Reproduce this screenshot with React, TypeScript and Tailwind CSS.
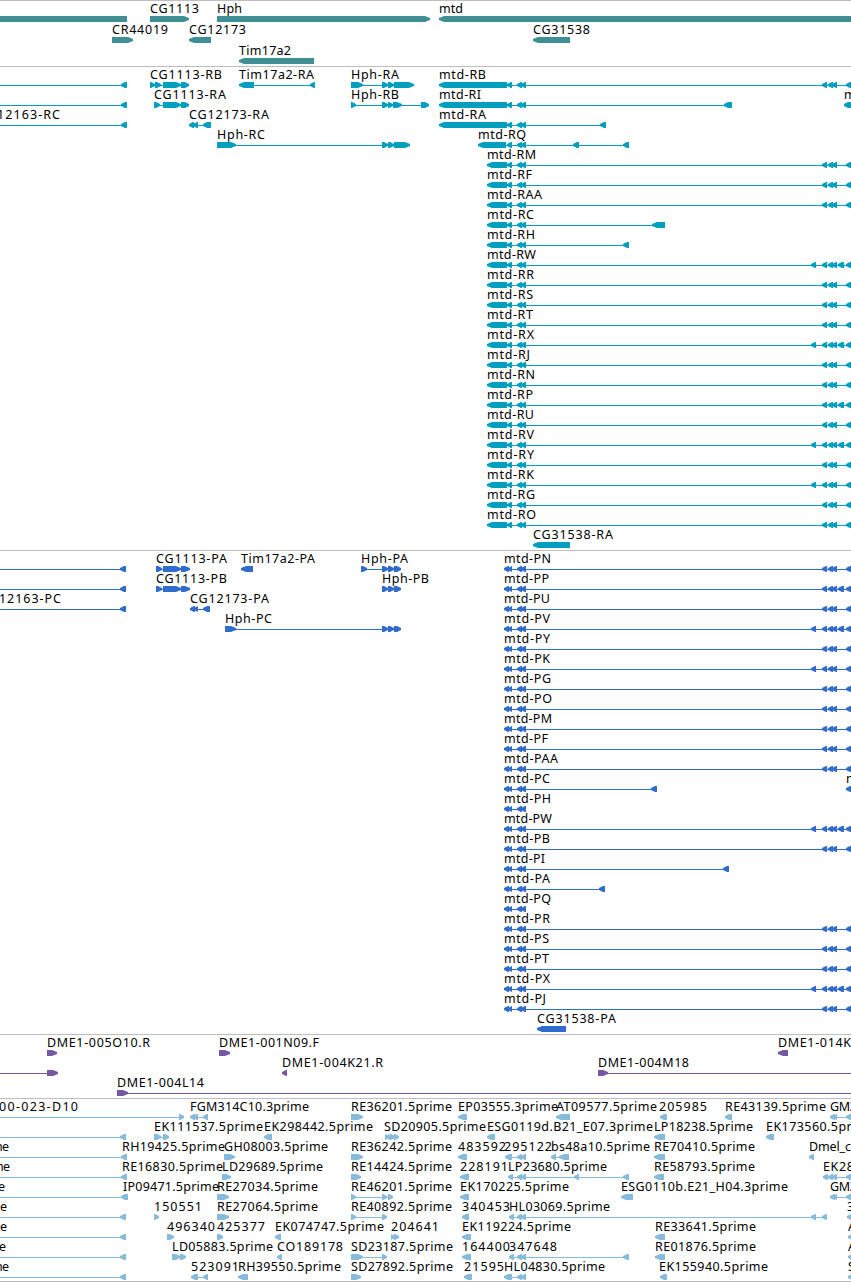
import React from "react";

type Strand = "L" | "R";
type Span = [number, number];

type Feature = {
  name?: string;
  strand: Strand;
  exons: Span[];
  // x of the label, when it is not the start of the feature
  labelX?: number;
  // x where the connecting line starts or stops, when it runs past the exons
  from?: number;
  to?: number;
};

type TrackProps = {
  color: string;
  rows: Feature[][];
  rowHeight?: number;
  className?: string;
};

const WIDTH = 851;
const EDGE = 860;

// label advance per character, 8px for everything not listed
const ADVANCE: Record<string, number> = {
  "-": 7, ".": 4, _: 6, A: 8, D: 9, E: 7, F: 6, G: 9, H: 9, I: 3, L: 6,
  M: 10, N: 9, O: 10, P: 7, Q: 9, S: 7, T: 7, W: 10, J: 4, a: 7, c: 6,
  e: 7, i: 3, l: 3, m: 11, r: 5, s: 6, t: 5,
};

const labelWidth = (text: string) =>
  text.split("").reduce((sum, ch) => sum + (ADVANCE[ch] ?? 8), 0);

const left = (name: string, exons: Span[], extra: Partial<Feature> = {}): Feature => ({
  name,
  strand: "L",
  exons,
  ...extra,
});

const right = (name: string, exons: Span[], extra: Partial<Feature> = {}): Feature => ({
  name,
  strand: "R",
  exons,
  ...extra,
});

function exonPoints([a, b]: Span, strand: Strand) {
  const head = b - a > 8 ? 5 : 4;
  if (strand === "R") {
    return `${a},13 ${b - head},13 ${b},15 ${b},17 ${b - head},19 ${a},19`;
  }
  return `${b},13 ${a + head},13 ${a},15 ${a},17 ${a + head},19 ${b},19`;
}

function FeatureGlyph({ feature, color }: { feature: Feature; color: string }) {
  const { name, strand, exons, labelX, from, to } = feature;
  const start = from ?? exons[0][0];
  const end = to ?? exons[exons.length - 1][1];
  return (
    <g>
      {(exons.length > 1 || from !== undefined || to !== undefined) && (
        <rect x={start} y={16} width={end - start} height={1} fill={color} shapeRendering="crispEdges" />
      )}
      {exons.map((exon) => (
        <polygon key={exon[0]} points={exonPoints(exon, strand)} fill={color} />
      ))}
      {name && (
        <text
          x={labelX ?? start}
          y={10}
          textLength={labelWidth(name)}
          className="fill-black font-['Noto_Sans','DejaVu_Sans',sans-serif] text-[12.5px]"
        >
          {name}
        </text>
      )}
    </g>
  );
}

function Track({ color, rows, rowHeight = 20, className = "pb-px" }: TrackProps) {
  return (
    <section className={`border-t border-[#bebebe] pt-0.5 ${className}`}>
      {rows.map((row, i) => (
        <svg key={i} width={WIDTH} height={rowHeight} className="block overflow-visible">
          {row.map((feature, j) => (
            <FeatureGlyph key={j} feature={feature} color={color} />
          ))}
        </svg>
      ))}
    </section>
  );
}

const genes: Feature[][] = [
  [
    { strand: "L", exons: [[-20, 127]] },
    right("CG1113", [[150, 189]]),
    right("Hph", [[217, 430]]),
    left("mtd", [[439, EDGE]]),
  ],
  [
    right("CR44019", [[112, 133]]),
    left("CG12173", [[189, 211]]),
    left("CG31538", [[533, 570]]),
  ],
  [left("Tim17a2", [[239, 314]])],
];

// exons shared by the mtd isoforms
const pair: Span[] = [[517, 522], [521, 526]];
const tail: Span[] = [[822, 827], [828, 833], [832, 837], [846, 852]];
const tailP: Span[] = [[822, 827], [828, 833], [832, 837], [838, 844], [846, 852]];
const tailK: Span[] = [[811, 816], ...tail];
const tailW: Span[] = [[811, 816], ...tailP];

const mtdR = (suffix: string, rest: Span[], start = 487, stop = 507) =>
  left(`mtd-R${suffix}`, [[start, stop], [507, 512], ...pair, ...rest]);

const mtdP = (suffix: string, rest: Span[]) =>
  left(`mtd-P${suffix}`, [[504, 509], [508, 512], ...pair, ...rest]);

const transcripts: Feature[][] = [
  [
    left("", [[121, 127]], { from: -10 }),
    right("CG1113-RB", [[150, 155], [155, 161], [163, 181], [181, 189]]),
    left("Tim17a2-RA", [[239, 254], [310, 315]]),
    right("Hph-RA", [[351, 363], [382, 388], [388, 394], [394, 414]]),
    mtdR("B", tail, 439),
  ],
  [
    left("", [[121, 127]], { from: -10 }),
    right("CG1113-RA", [[154, 160], [163, 181], [181, 189]]),
    right("Hph-RB", [[351, 356], [382, 388], [388, 393], [393, 402], [421, 429]]),
    mtdR("I", [[724, 732]], 439),
    left("m", [[844, 852]]),
  ],
  [
    left("12163-RC", [[121, 127]], { from: -10, labelX: -3 }),
    left("CG12173-RA", [[189, 194], [193, 198], [203, 211]]),
    mtdR("A", [[600, 606]], 439),
  ],
  [
    right("Hph-RC", [[217, 236], [382, 388], [388, 394], [394, 410]]),
    mtdR("Q", [[573, 579], [623, 629]], 478, 506),
  ],
  [mtdR("M", tail)],
  [mtdR("F", tail)],
  [mtdR("AA", tail)],
  [mtdR("C", [[652, 665]])],
  [mtdR("H", [[623, 629]])],
  [mtdR("W", tailW)],
  [mtdR("R", tail)],
  [mtdR("S", tail)],
  [mtdR("T", tail)],
  [mtdR("X", tailW)],
  [mtdR("J", tail)],
  [mtdR("N", tail)],
  [mtdR("P", tailP)],
  [mtdR("U", tail)],
  [mtdR("V", tailW)],
  [mtdR("Y", tail)],
  [mtdR("K", tailK)],
  [mtdR("G", tail)],
  [mtdR("O", tail)],
  [left("CG31538-RA", [[533, 570]])],
];

const codingRegions: Feature[][] = [
  [
    left("", [[120, 126]], { from: -10 }),
    right("CG1113-PA", [[156, 162], [163, 181], [181, 190]]),
    left("Tim17a2-PA", [[241, 253]]),
    right("Hph-PA", [[361, 367], [382, 388], [388, 394], [394, 401]]),
    mtdP("N", tail),
  ],
  [
    left("", [[120, 126]], { from: -10 }),
    right("CG1113-PB", [[156, 162], [163, 181], [181, 190]]),
    right("Hph-PB", [[382, 388], [388, 394], [394, 401]]),
    mtdP("P", tailP),
  ],
  [
    left("12163-PC", [[120, 126]], { from: -10, labelX: -1 }),
    left("CG12173-PA", [[190, 195], [194, 198], [203, 210]]),
    mtdP("U", tail),
  ],
  [
    right("Hph-PC", [[225, 236], [382, 388], [388, 394], [394, 401]]),
    mtdP("V", tailW),
  ],
  [mtdP("Y", tail)],
  [mtdP("K", tailK)],
  [mtdP("G", tail)],
  [mtdP("O", tail)],
  [mtdP("M", tail)],
  [mtdP("F", tail)],
  [mtdP("AA", tail)],
  [mtdP("C", [[651, 657]]), left("m", [[846, 852]])],
  [mtdP("H", [])],
  [mtdP("W", tailW)],
  [mtdP("B", tail)],
  [mtdP("I", [[723, 729]])],
  [mtdP("A", [[599, 605]])],
  [mtdP("Q", [])],
  [mtdP("R", tail)],
  [mtdP("S", tail)],
  [mtdP("T", tail)],
  [mtdP("X", tailW)],
  [mtdP("J", tail)],
  [left("CG31538-PA", [[537, 566]])],
];

const bacEnds: Feature[][] = [
  [
    right("DME1-005O10.R", [[47, 57]]),
    right("DME1-001N09.F", [[219, 230]]),
    left("DME1-014K", [[778, 788]]),
  ],
  [
    right("", [[47, 58]], { from: -10 }),
    left("DME1-004K21.R", [[282, 287]]),
    right("DME1-004M18", [[598, 608]], { to: EDGE }),
  ],
  [right("DME1-004L14", [[117, 128]], { to: EDGE })],
];

const ests: Feature[][] = [
  [
    right("00-023-D10", [[179, 184]], { from: -10, labelX: -1 }),
    left("FGM314C10.3prime", [[190, 195], [193, 198], [203, 208]]),
    right("RE36201.5prime", [[351, 363]]),
    left("EP03555.3prime", [[458, 467]]),
    left("AT09577.5prime", [[556, 570]]),
    left("205985", [[660, 667]], { labelX: 659 }),
    left("RE43139.5prime", [[725, 732]]),
    left("GM2", [[830, 835], [833, 837], [846, 852]]),
  ],
  [
    left("", [[120, 126]], { from: -10 }),
    right("EK111537.5prime", [[154, 161], [163, 169]]),
    left("EK298442.5prime", [[264, 272]]),
    right("SD20905.5prime", [[385, 389], [388, 392], [390, 395], [394, 399]], { labelX: 384 }),
    left("ESG0119d.B21_E07.3prime", [[487, 495]]),
    left("LP18238.5prime", [[654, 665]]),
    left("EK173560.5prime", [[766, 774]]),
  ],
  [
    left("me", [[121, 127]], { from: -10, labelX: -9 }),
    right("GH08003.5prime", [[224, 235]]),
    left("RH19425.5prime", [], { from: 122, to: 122 }),
    right("RE36242.5prime", [[351, 363]]),
    left("483592", [[458, 467]]),
    left("295122", [[505, 512], ...pair], { labelX: 504 }),
    left("bs48a10.5prime", [[551, 556], [559, 569]]),
    left("RE70410.5prime", [[654, 665]]),
    left("Dmel_c", [[809, 814]]),
  ],
  [
    left("me", [[121, 127]], { from: -10, labelX: -8 }),
    left("RE16830.5prime", [], { from: 122, to: 122 }),
    right("LD29689.5prime", [[222, 231]]),
    right("RE14424.5prime", [[351, 361]]),
    left("228191", [[460, 469]]),
    left("LP23680.5prime", [[508, 513], ...pair, [574, 579], [623, 629]]),
    left("RE58793.5prime", [[654, 664]]),
    left("EK28", [[823, 828], [828, 833], [832, 837], [846, 852]]),
  ],
  [
    left("e", [[121, 128]], { from: -10, labelX: -2 }),
    left("IP09471.5prime", [], { from: 123, to: 123 }),
    right("RE27034.5prime", [[217, 229]]),
    right("RE46201.5prime", [[351, 356], [382, 387], [388, 393]]),
    left("EK170225.5prime", [[460, 469]]),
    left("ESG0110b.E21_H04.3prime", [[621, 633]]),
    left("GM2", [[830, 835], [833, 837], [846, 852]]),
  ],
  [
    left("e", [[120, 126]], { from: -10, labelX: 0 }),
    right("150551", [[154, 159]]),
    right("RE27064.5prime", [[217, 229]]),
    right("RE40892.5prime", [[351, 356], [382, 387]]),
    left("340453", [[462, 469]]),
    left("HL03069.5prime", [[509, 514], ...pair, [811, 816], [822, 827]]),
    left("3", [[847, 852]]),
  ],
  [
    left("e", [[120, 126]], { from: -10, labelX: 0 }),
    right("496340", [[167, 174]]),
    right("425377", [[217, 223]]),
    left("EK074747.5prime", [[275, 281]]),
    right("204641", [[391, 395], [394, 399]]),
    left("EK119224.5prime", [[462, 471]]),
    left("RE33641.5prime", [[655, 665]]),
    left("A", [[848, 853]]),
  ],
  [
    left("e", [[120, 126]], { from: -10, labelX: -1 }),
    right("LD05883.5prime", [[172, 180], [180, 186]]),
    left("CO189178", [[277, 282]]),
    right("SD23187.5prime", [[351, 363], [382, 387]]),
    left("164400", [[462, 471]]),
    left("347648", [[509, 514], ...pair, [623, 629]]),
    left("RE01876.5prime", [[655, 665]]),
    left("A", [[848, 853]]),
  ],
  [
    left("me", [[120, 126]], { from: -10, labelX: -9 }),
    left("523091", [[191, 198], [203, 208]]),
    left("RH39550.5prime", [[238, 248]]),
    right("SD27892.5prime", [[351, 361]]),
    left("21595", [[464, 472]]),
    left("HL04830.5prime", [[504, 512], ...pair]),
    left("EK155940.5prime", [[660, 667]], { labelX: 659 }),
    left("S", [[848, 853]]),
  ],
];

export default function App() {
  return (
    <main className="flex h-[1282px] w-[851px] flex-col overflow-hidden bg-white">
      <Track color="#3f8f94" rows={genes} rowHeight={21} className="" />
      <Track color="#009ebf" rows={transcripts} />
      <Track color="#306ccc" rows={codingRegions} />
      <Track color="#7458a6" rows={bacEnds} />
      <Track color="#87bbdc" rows={ests} className="border-b" />
    </main>
  );
}
